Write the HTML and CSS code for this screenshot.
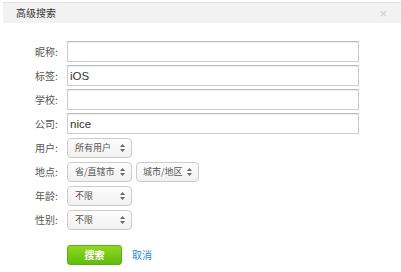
FILE: index.html
```html
<!DOCTYPE html>
<html lang="zh">
<head>
    <meta charset="UTF-8">
    <title>高级搜索</title>
    <link rel="stylesheet" href="styles.css">
</head>
<body>
    <div class="dialog">
        <div class="header">
            <span class="title">高级搜索</span>
            <span class="close">×</span>
        </div>
        <div class="form">
            <label>昵称:</label>
            <div class="field"><input type="text" value=""></div>
            <label>标签:</label>
            <div class="field"><input type="text" value="iOS"></div>
            <label>学校:</label>
            <div class="field"><input type="text" value=""></div>
            <label>公司:</label>
            <div class="field"><input type="text" value="nice"></div>
            <label class="sel-label">用户:</label>
            <div class="field sel-row">
                <div class="select">所有用户<svg class="arrows" width="5" height="8" viewBox="0 0 5 8"><path d="M2.5 0L5 3H0z M2.5 8L0 5h5z" fill="#666"/></svg></div>
            </div>
            <label class="sel-label">地点:</label>
            <div class="field sel-row">
                <div class="select">省/直辖市<svg class="arrows" width="5" height="8" viewBox="0 0 5 8"><path d="M2.5 0L5 3H0z M2.5 8L0 5h5z" fill="#666"/></svg></div>
                <div class="select">城市/地区<svg class="arrows" width="5" height="8" viewBox="0 0 5 8"><path d="M2.5 0L5 3H0z M2.5 8L0 5h5z" fill="#666"/></svg></div>
            </div>
            <label class="sel-label">年龄:</label>
            <div class="field sel-row">
                <div class="select">不限<svg class="arrows" width="5" height="8" viewBox="0 0 5 8"><path d="M2.5 0L5 3H0z M2.5 8L0 5h5z" fill="#666"/></svg></div>
            </div>
            <label class="sel-label">性别:</label>
            <div class="field sel-row">
                <div class="select">不限<svg class="arrows" width="5" height="8" viewBox="0 0 5 8"><path d="M2.5 0L5 3H0z M2.5 8L0 5h5z" fill="#666"/></svg></div>
            </div>
        </div>
        <div class="actions">
            <button class="btn-search">搜索</button>
            <a class="cancel">取消</a>
        </div>
    </div>
</body>
</html>
```

FILE: styles.css
```css
body { margin: 0; background: #fff; font-family: "Noto Sans CJK SC", "Liberation Sans", sans-serif; color: #444; }
.dialog { padding: 2px 0 0 3px; }
.header { box-sizing: border-box; height: 21px; background: #f2f2f2; border-top: 1px solid #e2e2e2; display: flex; align-items: center; justify-content: space-between; padding: 0 14px 0 13px; }
.title { font-size: 10px; line-height: 12px; color: #333; }
.close { font-family: "Liberation Sans", sans-serif; font-size: 13px; line-height: 13px; color: #ccc; }
.form { display: grid; grid-template-columns: 32px 292px; row-gap: 3px; padding: 18px 0 0 32px; align-items: center; }
.form label { font-size: 10px; line-height: 12px; color: #555; }
.field { display: flex; height: 21px; align-items: center; }
.field input { box-sizing: border-box; width: 292px; height: 21px; margin: 0; border: 1px solid #ccc; border-top-color: #bbb; box-shadow: inset 0 1px 1px #eee; padding: 0 2px; font-family: "Liberation Sans", sans-serif; font-size: 11.5px; color: #333; outline: none; }
.sel-row { gap: 4px; }
.form .sel-row { height: 20px; margin-top: 1px; }
.select { box-sizing: border-box; width: 65px; height: 20px; border: 1px solid #ccc; border-radius: 4px; background: linear-gradient(#fdfdfd, #f1f1f1); display: flex; align-items: center; justify-content: space-between; padding: 0 6px 0 7px; font-size: 9px; line-height: 12px; color: #555; white-space: nowrap; }
.select + .select { width: 63px; padding-left: 6px; }
.arrows { flex: none; }
.actions { display: flex; align-items: center; gap: 10px; padding: 15px 0 0 64px; }
.btn-search { width: 55px; height: 20px; border: 1px solid #5fae12; border-radius: 3px; background: linear-gradient(#91d81f, #62bb10); color: #fff; font-family: "Noto Sans CJK SC", sans-serif; font-size: 10px; line-height: 12px; font-weight: bold; padding: 0; }
.cancel { font-size: 10px; line-height: 12px; color: #2a8bd0; text-decoration: none; }
```
